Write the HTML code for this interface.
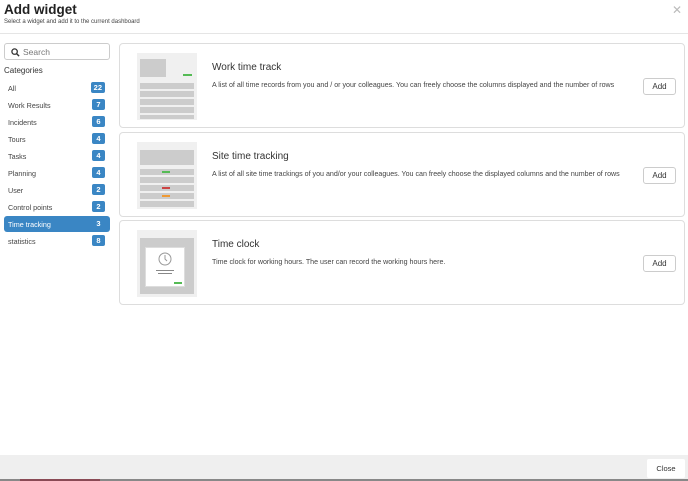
<!DOCTYPE html>
<html><head><style>
*{box-sizing:border-box;margin:0;padding:0}
body{width:688px;height:481px;background:#fff;font-family:"Liberation Sans",sans-serif;color:#333;position:relative;overflow:hidden}
.abs{position:absolute}
h1{position:absolute;left:4px;top:2px;font-size:13.5px;font-weight:bold;color:#222}
.sub{left:4px;top:19px;font-size:6px;color:#444}
.x{right:6px;top:3px;font-size:12px;color:#bbb}
.hr{left:0;right:0;top:33px;height:1px;background:#e5e5e5}
.search{left:4px;top:43px;width:106px;height:17px;border:1px solid #ccc;border-radius:3px;font-size:8.5px;color:#777;padding:3px 0 0 18px}
.cat{left:4px;top:66px;font-size:8px;color:#333}
.item{left:4px;width:106px;height:16px;font-size:7.2px;color:#444;padding:4px 0 0 4px;border-radius:3px}
.item b{position:absolute;right:5px;top:2px;background:#3a86c4;color:#fff;font-size:7.5px;border-radius:2px;padding:1px 3px;min-width:13px;height:11px;text-align:center}
.item.sel{background:#3a86c4;color:#fff}
.item.sel b{background:none}
.card{left:119px;width:566px;height:85px;border:1px solid #ddd;border-radius:4px}
.thumb{position:absolute;left:17px;top:9px;width:60px;height:67px;background:#f0f0f0}
.ct{position:absolute;left:92px;top:18px;font-size:10px;color:#333}
.cd{position:absolute;left:92px;top:37px;font-size:7.1px;color:#444}
.add{position:absolute;left:523px;top:34px;width:33px;height:17px;border:1px solid #ccc;border-radius:3px;font-size:8px;text-align:center;line-height:15px;color:#333}
.foot{left:0;top:455px;width:688px;height:25px;background:#efefef}
.close{left:647px;top:459px;width:38px;height:19px;background:#fff;border-radius:2px;font-size:7.5px;text-align:center;line-height:19px;color:#333}
.bl{left:0;top:479px;width:688px;height:2px;background:#888}
.r{background:#ccc;position:absolute;left:3px;width:54px;height:6px}
</style></head><body>
<h1>Add widget</h1>
<div class="abs sub">Select a widget and add it to the current dashboard</div>
<div class="abs x">✕</div>
<div class="abs hr"></div>
<div class="abs search"><svg style="position:absolute;left:6px;top:4px" width="9" height="9" viewBox="0 0 10 10"><circle cx="4" cy="4" r="3" fill="none" stroke="#333" stroke-width="1.4"/><line x1="6.2" y1="6.2" x2="9" y2="9" stroke="#333" stroke-width="1.6"/></svg>Search</div>
<div class="abs cat">Categories</div>
<div class="abs item" style="top:80px">All<b>22</b></div>
<div class="abs item" style="top:97px">Work Results<b>7</b></div>
<div class="abs item" style="top:114px">Incidents<b>6</b></div>
<div class="abs item" style="top:131px">Tours<b>4</b></div>
<div class="abs item" style="top:148px">Tasks<b>4</b></div>
<div class="abs item" style="top:165px">Planning<b>4</b></div>
<div class="abs item" style="top:182px">User<b>2</b></div>
<div class="abs item" style="top:199px">Control points<b>2</b></div>
<div class="abs item sel" style="top:216px">Time tracking<b>3</b></div>
<div class="abs item" style="top:233px">statistics<b>8</b></div>

<div class="abs card" style="top:43px"><div class="thumb"><div class="r" style="top:6px;height:18px;width:26px"></div><div class="r" style="top:30px"></div><div class="r" style="top:38px"></div><div class="r" style="top:46px"></div><div class="r" style="top:54px"></div><div class="r" style="top:62px;height:4px"></div><div style="position:absolute;left:46px;top:21px;width:9px;height:2px;background:#5b5"></div></div>
<div class="ct">Work time track</div><div class="cd">A list of all time records from you and / or your colleagues. You can freely choose the columns displayed and the number of rows</div><div class="add">Add</div></div>

<div class="abs card" style="top:132px"><div class="thumb"><div class="r" style="top:8px;height:15px"></div><div class="r" style="top:27px"></div><div class="r" style="top:35px"></div><div class="r" style="top:43px"></div><div class="r" style="top:51px"></div><div class="r" style="top:59px"></div><div style="position:absolute;left:25px;top:29px;width:8px;height:2px;background:#5b5"></div><div style="position:absolute;left:25px;top:45px;width:8px;height:2px;background:#c44"></div><div style="position:absolute;left:25px;top:53px;width:8px;height:2px;background:#e93"></div></div>
<div class="ct">Site time tracking</div><div class="cd">A list of all site time trackings of you and/or your colleagues. You can freely choose the displayed columns and the number of rows</div><div class="add">Add</div></div>

<div class="abs card" style="top:220px"><div class="thumb"><div class="r" style="top:8px;height:56px"></div><div style="position:absolute;left:8px;top:17px;width:40px;height:40px;background:#fff;border:1px solid #ddd"><svg style="position:absolute;left:12px;top:4px" width="14" height="14" viewBox="0 0 14 14"><circle cx="7" cy="7" r="6" fill="none" stroke="#999"/><path d="M7 3V7L9 9" fill="none" stroke="#999"/></svg><div style="position:absolute;left:10px;top:22px;width:18px;height:1px;background:#888"></div><div style="position:absolute;left:12px;top:25px;width:14px;height:1px;background:#888"></div><div style="position:absolute;left:28px;top:34px;width:8px;height:2px;background:#5b5"></div></div></div>
<div class="ct">Time clock</div><div class="cd">Time clock for working hours. The user can record the working hours here.</div><div class="add">Add</div></div>

<div class="abs foot"></div>
<div class="abs close">Close</div>
<div class="abs bl"></div>
<div class="abs" style="left:20px;top:479px;width:80px;height:2px;background:#8a4a55"></div>
</body></html>
